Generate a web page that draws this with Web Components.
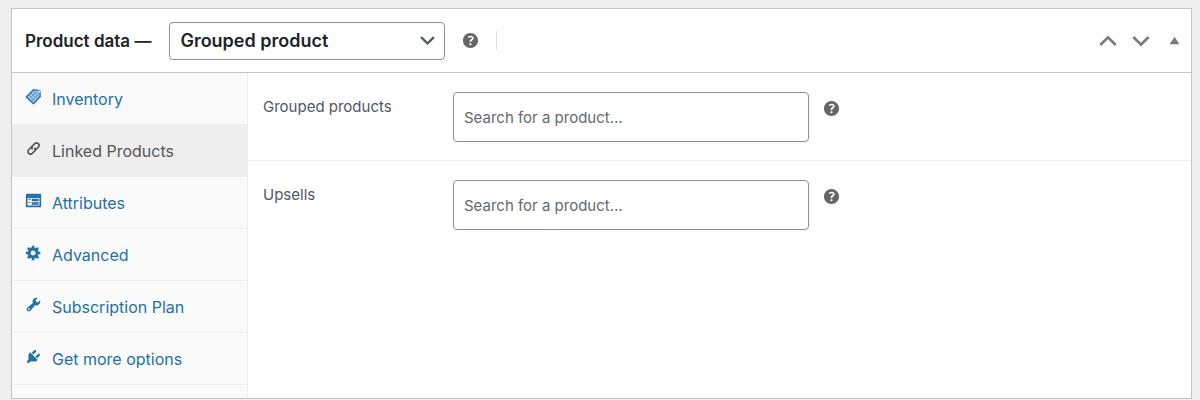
<!DOCTYPE html>
<html lang="en">
<head>
<meta charset="utf-8">
<meta name="viewport" content="width=device-width, initial-scale=1">
<title>Product data</title>
<style>
  body {
    margin: 8px 8px 0 11px;
    background: #efefef;
    color: #50575e;
    font-family: Inter, "Liberation Sans", sans-serif;
    font-size: 16px;
    line-height: 24px;
  }
</style>
</head>
<body>
<product-data-box>
  <product-type slot="header"></product-type>
  <panel-tab slot="tabs" icon="tag">Inventory</panel-tab>
  <panel-tab slot="tabs" icon="link" active>Linked Products</panel-tab>
  <panel-tab slot="tabs" icon="form">Attributes</panel-tab>
  <panel-tab slot="tabs" icon="gear">Advanced</panel-tab>
  <panel-tab slot="tabs" icon="wrench">Subscription Plan</panel-tab>
  <panel-tab slot="tabs" icon="plug">Get more options</panel-tab>
  <product-search label="Grouped products"></product-search>
  <product-search label="Upsells"></product-search>
</product-data-box>

<script>
const ICONS = {
  help: '<path fill-rule="evenodd" d="M17 10c0-3.87-3.14-7-7-7-3.87 0-7 3.13-7 7s3.13 7 7 7c3.86 0 7-3.13 7-7zm-6.3 1.48H9.14v-.43c0-.38.08-.7.24-.98s.46-.57.88-.89c.41-.29.68-.53.81-.71.14-.18.2-.39.2-.62 0-.25-.09-.44-.28-.58-.19-.13-.45-.19-.79-.19-.58 0-1.25.19-2 .57l-.64-1.28c.87-.49 1.8-.74 2.77-.74.81 0 1.45.2 1.92.58.48.39.71.91.71 1.55 0 .43-.09.8-.29 1.11-.19.32-.57.67-1.11 1.06-.38.28-.61.49-.71.63-.1.15-.15.34-.15.57v.35zm-1.47 2.74c-.18-.17-.27-.42-.27-.73 0-.33.08-.58.26-.75s.43-.25.77-.25c.32 0 .57.09.75.26s.27.42.27.74c0 .3-.09.55-.27.72-.18.18-.43.27-.75.27-.33 0-.58-.09-.76-.26z"/>',
  tag: '<path fill="#9cc6ea" stroke="currentColor" stroke-width="1.5" stroke-linejoin="round" d="M1.500 10.500 10 2l7 1.500 1 6.500-8 8.500z"/><path fill="none" stroke="currentColor" stroke-width=".5" d="m4.500 8 7.500 8M7 5.500l7.500 8M9.500 3.500l7.500 8M5 13l8.500-8.500M7.500 15.500l8.500-8.500"/><path fill="#fafafa" stroke="currentColor" stroke-width=".8" d="m13.500 2.500 4.500.5-.5 4.500z"/>',
  link: '<g fill="none" stroke="currentColor" stroke-width="1.900" transform="rotate(-45 10 10)"><path d="M11.500 7H5a3 3 0 0 0 0 6h3.500a3 3 0 0 0 3-3"/><path d="M8.500 13H15a3 3 0 0 0 0-6h-3.500a3 3 0 0 0-3 3"/></g>',
  form: '<path fill-rule="evenodd" d="M2 2h16c.55 0 1 .45 1 1v14c0 .55-.45 1-1 1H2c-.55 0-1-.45-1-1V3c0-.55.45-1 1-1zm15 14V7H3v9h14zM4 8v1h3V8H4zm4 0v3h8V8H8zm-4 4v1h3v-1H4zm4 0v3h8v-3H8z"/>',
  gear: '<path fill-rule="evenodd" d="M18 12h-2.180c-.17.7-.44 1.350-.81 1.930l1.540 1.540-2.100 2.100-1.540-1.540c-.58.36-1.230.63-1.910.79V19H8v-2.180c-.68-.16-1.330-.43-1.910-.79l-1.540 1.540-2.120-2.120 1.540-1.540c-.36-.58-.63-1.230-.79-1.910H1V9.030h2.170c.16-.7.44-1.350.8-1.940L2.430 5.550l2.100-2.100 1.540 1.540c.58-.37 1.240-.64 1.930-.81V2h3v2.180c.68.16 1.330.43 1.910.79l1.540-1.540 2.120 2.120-1.540 1.540c.36.59.64 1.240.8 1.940H18V12zm-8.500 1.500c1.660 0 3-1.340 3-3s-1.340-3-3-3-3 1.340-3 3 1.340 3 3 3z"/>',
  wrench: '<path fill-rule="evenodd" d="M16.680 9.770c-1.340 1.340-3.300 1.670-4.950.99l-5.410 6.520c-.99.99-2.590.99-3.580 0s-.99-2.590 0-3.570l6.520-5.420c-.68-1.650-.35-3.610.99-4.950 1.280-1.280 3.120-1.620 4.720-1.060l-2.890 2.890 2.820 2.820 2.860-2.870c.53 1.580.18 3.390-1.080 4.650zM3.810 16.210c.4.39 1.040.39 1.430 0 .4-.4.4-1.040 0-1.430-.39-.4-1.030-.4-1.430 0-.39.39-.39 1.030 0 1.430z"/>',
  plug: '<path d="M13.110 4.360 9.870 7.600 8 5.730l3.240-3.240c.35-.34 1.050-.2 1.560.32.52.51.66 1.210.31 1.550zm-8 1.770.91-1.120 9.010 9.010-1.190.84c-.71.71-2.630 1.160-3.820 1.160H6.140L4.900 17.260c-.59.59-1.540.59-2.120 0-.59-.58-.59-1.530 0-2.120l1.240-1.240v-3.880c0-1.130.4-3.190 1.090-3.890zm7.260 3.970 3.240-3.240c.34-.35 1.040-.21 1.550.31.52.51.66 1.210.31 1.550l-3.240 3.250z"/>',
  up: '<path fill="none" stroke="currentColor" stroke-width="3" d="m1.500 14.500 8.500-8.500 8.500 8.500"/>',
  down: '<path fill="none" stroke="currentColor" stroke-width="3" d="m1.500 5.500 8.500 8.500 8.500-8.500"/>',
  toggle: '<path d="M10 3 19 17H1z"/>'
}

class WcIcon extends HTMLElement {
  constructor() {
    super()
    this.attachShadow({mode: 'open'})
  }

  connectedCallback() {
    const name = this.getAttribute('name')
    // the help glyph keeps a margin of 3 units inside its 20 unit grid
    const box = name === 'help' ? '3 3 14 14' : '0 0 20 20'
    this.shadowRoot.innerHTML = `
      <style>
        :host {
          display: block;
          flex: none;
          width: 15px;
          height: 15px;
        }
        svg {
          display: block;
          width: 100%;
          height: 100%;
          fill: currentColor;
        }
      </style>
      <svg viewBox="${box}" aria-hidden="true">${ICONS[name]}</svg>
    `
  }
}

class ProductDataBox extends HTMLElement {
  constructor() {
    super()
    this.attachShadow({mode: 'open'}).innerHTML = `
      <style>
        :host {
          display: block;
          border: 1px solid #c3c4c7;
          background: #fff;
        }
        header {
          display: flex;
          align-items: center;
          justify-content: space-between;
          height: 63px;
          border-bottom: 1px solid #c3c4c7;
        }
        .handles {
          display: flex;
          align-items: center;
          gap: 15px;
          padding-right: 11px;
          color: #787c82;
        }
        button {
          display: block;
          padding: 0;
          border: 0;
          background: none;
          color: inherit;
        }
        .order wc-icon {
          width: 18px;
          height: 18px;
        }
        .toggle {
          margin-left: 4px;
        }
        .toggle wc-icon {
          width: 11px;
          height: 11px;
        }
        .content {
          display: grid;
          grid-template-columns: 236px 1fr;
        }
        nav {
          box-sizing: border-box;
          padding-bottom: 13px;
          border-right: 1px solid #eee;
          background: #fafafa;
        }
      </style>
      <header>
        <slot name="header"></slot>
        <div class="handles">
          <button class="order" type="button" aria-label="Move up"><wc-icon name="up"></wc-icon></button>
          <button class="order" type="button" aria-label="Move down"><wc-icon name="down"></wc-icon></button>
          <button class="toggle" type="button" aria-label="Toggle panel"><wc-icon name="toggle"></wc-icon></button>
        </div>
      </header>
      <div class="content">
        <nav><slot name="tabs"></slot></nav>
        <main><slot></slot></main>
      </div>
    `
  }
}

class ProductType extends HTMLElement {
  constructor() {
    super()
    this.attachShadow({mode: 'open'}).innerHTML = `
      <style>
        :host {
          display: flex;
          align-items: center;
          padding-left: 13px;
          color: #1d2327;
          font-weight: 600;
        }
        label {
          margin-right: 18px;
          font-size: 17px;
        }
        .select {
          display: grid;
          align-items: center;
          margin-right: 18px;
        }
        select, .select wc-icon {
          grid-area: 1 / 1;
        }
        select {
          appearance: none;
          width: 276px;
          height: 38px;
          padding: 0 40px 0 10px;
          border: 1px solid #8c8f94;
          border-radius: 4px;
          background: #fff;
          color: inherit;
          font: inherit;
          font-size: 18px;
        }
        .select wc-icon {
          justify-self: end;
          margin-right: 10px;
          color: #50575e;
          pointer-events: none;
        }
        .help {
          color: #666;
        }
        .divider {
          width: 1px;
          height: 19px;
          margin-left: 18px;
          background: #dcdcde;
        }
      </style>
      <label for="type">Product data —</label>
      <div class="select">
        <select id="type"><option>Grouped product</option></select>
        <wc-icon name="down"></wc-icon>
      </div>
      <wc-icon class="help" name="help"></wc-icon>
      <span class="divider"></span>
    `
  }
}

class PanelTab extends HTMLElement {
  constructor() {
    super()
    this.attachShadow({mode: 'open'})
  }

  connectedCallback() {
    this.shadowRoot.innerHTML = `
      <style>
        :host {
          display: block;
          border-bottom: 1px solid #eee;
          color: #2271a8;
        }
        :host([active]) {
          background: #eee;
          color: #555;
        }
        a {
          display: flex;
          align-items: center;
          gap: 10px;
          height: 51px;
          padding-left: 13px;
          color: inherit;
          text-decoration: none;
        }
        wc-icon {
          width: 17px;
          height: 17px;
          margin-bottom: 4px;
        }
      </style>
      <a href="#"><wc-icon name="${this.getAttribute('icon')}"></wc-icon><span><slot></slot></span></a>
    `
  }
}

class ProductSearch extends HTMLElement {
  constructor() {
    super()
    this.attachShadow({mode: 'open'})
  }

  connectedCallback() {
    this.shadowRoot.innerHTML = `
      <style>
        :host {
          display: flex;
          align-items: flex-start;
          padding: 19px 15px 18px;
          border-bottom: 1px solid #eee;
          font-size: 15px;
        }
        :host(:last-of-type) {
          border-bottom: 0;
        }
        label {
          flex: none;
          width: 190px;
          padding-top: 3px;
        }
        input {
          box-sizing: border-box;
          flex: 0 1 356px;
          min-width: 0;
          height: 50px;
          padding: 0 10px;
          border: 1px solid #8c8f94;
          border-radius: 4px;
          background: #fff;
          color: inherit;
          font: inherit;
        }
        input::placeholder {
          color: #646970;
          opacity: 1;
        }
        wc-icon {
          margin: 9px 0 0 15px;
          color: #666;
        }
      </style>
      <label for="search">${this.getAttribute('label')}</label>
      <input id="search" type="text" placeholder="Search for a product…">
      <wc-icon name="help"></wc-icon>
    `
  }
}

customElements.define('wc-icon', WcIcon)
customElements.define('product-data-box', ProductDataBox)
customElements.define('product-type', ProductType)
customElements.define('panel-tab', PanelTab)
customElements.define('product-search', ProductSearch)
</script>
</body>
</html>
